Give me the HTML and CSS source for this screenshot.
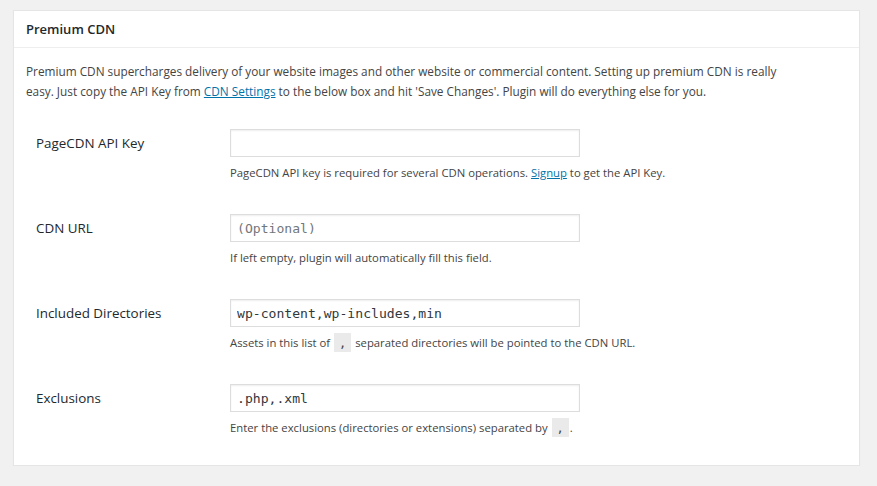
FILE: index.html
```html
<!DOCTYPE html>
<html>
<head>
<meta charset="utf-8">
<link rel="stylesheet" href="styles.css">
</head>
<body>
<div class="postbox">
  <h2 class="hndle">Premium CDN</h2>
  <div class="inside">
    <p class="intro">Premium CDN supercharges delivery of your website images and other website or commercial content. Setting up premium CDN is really easy. Just copy the API Key from <a href="#">CDN Settings</a> to the below box and hit 'Save Changes'. Plugin will do everything else for you.</p>
    <div class="form">
      <div class="row">
        <label class="label">PageCDN API Key</label>
        <div class="field">
          <input class="text" type="text" value="">
          <p class="desc">PageCDN API key is required for several CDN operations. <a href="#">Signup</a> to get the API Key.</p>
        </div>
      </div>
      <div class="row">
        <label class="label">CDN URL</label>
        <div class="field">
          <input class="text" type="text" placeholder="(Optional)">
          <p class="desc">If left empty, plugin will automatically fill this field.</p>
        </div>
      </div>
      <div class="row">
        <label class="label">Included Directories</label>
        <div class="field">
          <input class="text" type="text" value="wp-content,wp-includes,min">
          <p class="desc">Assets in this list of <code>,</code> separated directories will be pointed to the CDN URL.</p>
        </div>
      </div>
      <div class="row">
        <label class="label">Exclusions</label>
        <div class="field">
          <input class="text" type="text" value=".php,.xml">
          <p class="desc">Enter the exclusions (directories or extensions) separated by <code>,</code>.</p>
        </div>
      </div>
    </div>
  </div>
</div>
</body>
</html>
```
FILE: styles.css
```css
html, body {
  margin: 0;
  padding: 0;
  background: #f1f1f1;
}
body {
  padding: 10px 17px 0 13px;
  font-family: "Open Sans", "Noto Sans", sans-serif;
  color: #444;
  font-size: 13px;
}
.postbox {
  background: #fff;
  border: 1px solid #e5e5e5;
  box-shadow: 0 1px 1px rgba(0,0,0,0.04);
}
.hndle {
  margin: 0;
  padding: 8px 12px;
  font-size: 13px;
  line-height: 20px;
  font-weight: 600;
  color: #23282d;
  border-bottom: 1px solid #eee;
}
.inside {
  padding: 0 12px 12px;
}
.intro {
  margin: 13px 0 0;
  max-width: 760px;
  font-size: 11.8px;
  line-height: 20px;
}
a {
  color: #0073aa;
  text-decoration: underline;
}
.form {
  margin-top: 12px;
}
.row {
  display: flex;
  align-items: flex-start;
  padding: 16px 0;
}
.label {
  width: 194px;
  padding-left: 10px;
  font-size: 13.4px;
  line-height: 28px;
  color: #23282d;
}
.field {
  display: flex;
  flex-direction: column;
}
.text {
  box-sizing: border-box;
  width: 350px;
  height: 28px;
  margin: 0;
  padding: 3px 6px;
  border: 1px solid #ddd;
  box-shadow: inset 0 1px 2px rgba(0,0,0,0.07);
  font-family: "DejaVu Sans Mono", monospace;
  font-size: 13.1px;
  color: #32373c;
  outline: none;
}
.text::placeholder {
  color: #72777c;
}
.desc {
  margin: 7px 0 0;
  font-size: 11.3px;
  line-height: 18px;
  height: 18px;
  color: #444;
}
code {
  background: #eaeaea;
  font-family: "DejaVu Sans Mono", monospace;
  font-size: 12px;
  padding: 3px 5px 2px;
  margin: 0 1px;
}
```
